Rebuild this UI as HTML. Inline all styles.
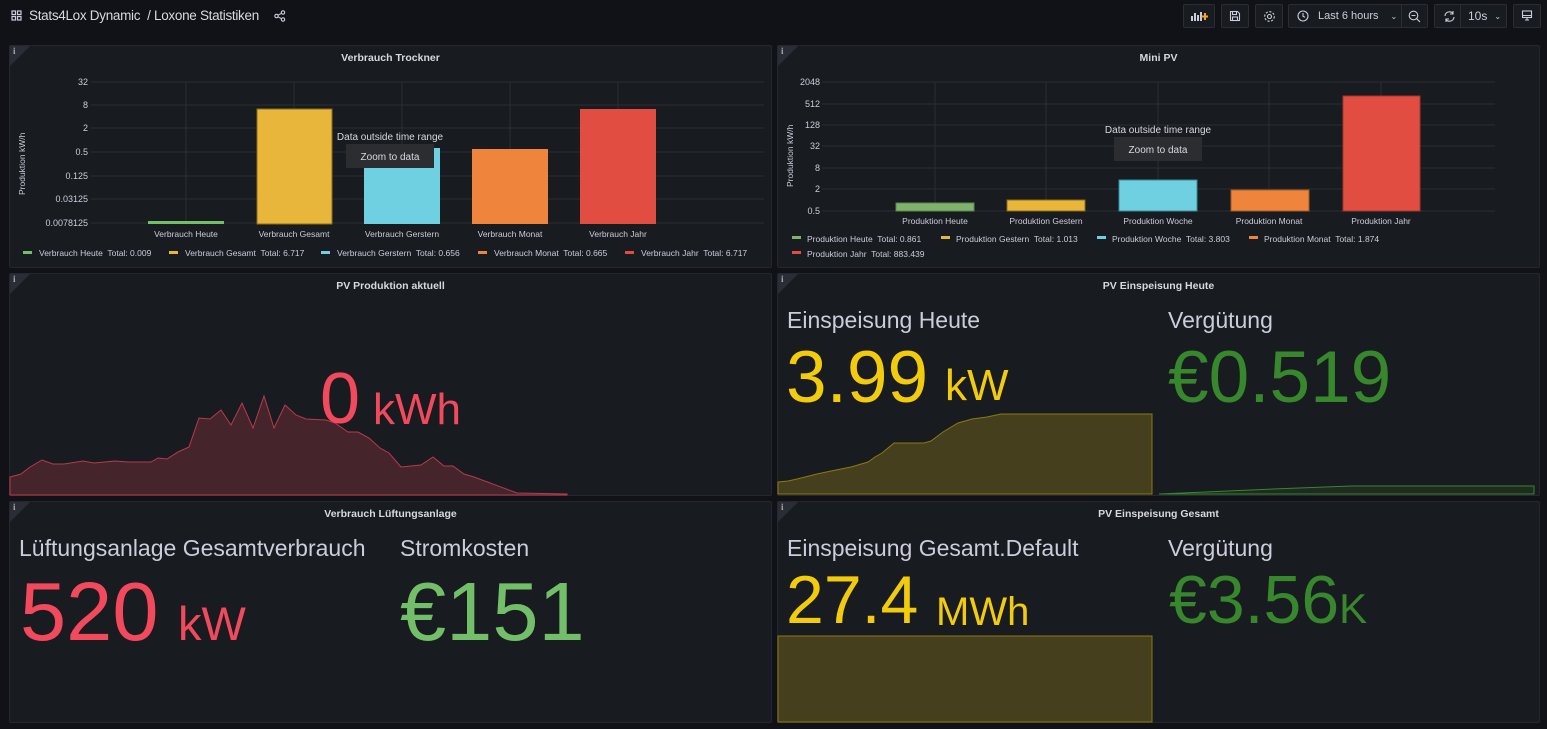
<!DOCTYPE html>
<html><head><meta charset="utf-8"><style>
*{margin:0;padding:0;box-sizing:border-box}
body{width:1547px;height:729px;background:#111217;font-family:"Liberation Sans",sans-serif;color:#ccccdc;position:relative;overflow:hidden}
.p{position:absolute;background:#181b1f;border:1px solid #24272e;border-radius:2px}
.t{position:absolute;left:0;right:0;top:6px;text-align:center;font-size:10.5px;font-weight:bold;color:#d8d9e0}
.i{position:absolute;left:0;top:0;width:0;height:0;border-top:20px solid #2a2d35;border-right:20px solid transparent}
.i span{position:absolute;left:3px;top:-20px;font-size:9px;font-family:"Liberation Serif",serif;font-weight:bold;color:#aaa}
.a{position:absolute;white-space:nowrap;line-height:1}
.btn{position:absolute;top:4px;height:24px;border:1px solid #2a2d35;background:#181b1f;border-radius:2px;color:#ccccdc;font-size:11px;display:flex;align-items:center;justify-content:center}
svg text{font-family:"Liberation Sans",sans-serif;white-space:pre}
</style></head><body>
<!-- header -->
<div class="a" style="left:11px;top:10px;font-size:13px;color:#9fa1a8">
<svg width="11" height="11" viewBox="0 0 11 11" fill="none" stroke="#ccccdc" stroke-width="1.2"><rect x="1" y="1" width="3.5" height="3.5"/><rect x="6.5" y="1" width="3.5" height="3.5"/><rect x="1" y="6.5" width="3.5" height="3.5"/><rect x="6.5" y="6.5" width="3.5" height="3.5"/></svg></div>
<div class="a" style="left:29px;top:9px;font-size:13.5px;letter-spacing:-0.3px;color:#d8d9e0">Stats4Lox Dynamic &nbsp;/ Loxone Statistiken</div>
<svg class="a" style="left:274px;top:10px" width="12" height="12" viewBox="0 0 12 12" fill="none" stroke="#ccccdc" stroke-width="1.1"><circle cx="9" cy="2.5" r="1.7"/><circle cx="2.5" cy="6" r="1.7"/><circle cx="9" cy="9.5" r="1.7"/><path d="M4 5.2L7.5 3.3M4 6.8L7.5 8.7"/></svg>

<div class="btn" style="left:1183px;width:32px"><svg width="18" height="12" viewBox="0 0 18 12"><g fill="#ccccdc"><rect x="1" y="6" width="2" height="5"/><rect x="4" y="3" width="2" height="8"/><rect x="7" y="5" width="2" height="6"/><rect x="10" y="2" width="2" height="9"/></g><path d="M15 3v7M11.5 6.5h7" stroke="#f5a623" stroke-width="2"/></svg></div>
<div class="btn" style="left:1221px;width:28px"><svg width="12" height="12" viewBox="0 0 12 12" fill="none" stroke="#ccccdc" stroke-width="1.1"><path d="M1.5 1.5h7l2 2v7h-9z"/><rect x="3.5" y="1.5" width="4" height="3"/><rect x="3.5" y="7" width="5" height="3.5"/></svg></div>
<div class="btn" style="left:1255px;width:28px"><svg width="13" height="13" viewBox="0 0 13 13" fill="none" stroke="#ccccdc" stroke-width="1.1"><circle cx="6.5" cy="6.5" r="2"/><circle cx="6.5" cy="6.5" r="4.8" stroke-dasharray="2.2 1.5"/></svg></div>
<div class="btn" style="left:1288px;width:140px;justify-content:flex-start;padding-left:8px"><svg width="12" height="12" viewBox="0 0 12 12" fill="none" stroke="#ccccdc" stroke-width="1.1"><circle cx="6" cy="6" r="5"/><path d="M6 3v3.3l2 1"/></svg><span style="margin-left:9px">Last 6 hours</span><span style="margin-left:12px;font-size:8px">&#8964;</span></div>
<div class="a" style="left:1401px;top:5px;width:1px;height:22px;background:#2a2d35"></div>
<svg class="a" style="left:1408px;top:10px" width="13" height="13" viewBox="0 0 13 13" fill="none" stroke="#ccccdc" stroke-width="1.1"><circle cx="5.5" cy="5.5" r="4.3"/><path d="M3.5 5.5h4M8.7 8.7l3.3 3.3"/></svg>
<div class="btn" style="left:1434px;width:73px;justify-content:flex-start;padding-left:8px"><svg width="13" height="13" viewBox="0 0 13 13" fill="none" stroke="#ccccdc" stroke-width="1.1"><path d="M2 6a4.5 4.5 0 0 1 8-2.5M11 7a4.5 4.5 0 0 1-8 2.5M10 1v3H7M3 12V9h3"/></svg><span style="margin-left:12px;font-size:12px">10s</span><span style="margin-left:7px;font-size:8px">&#8964;</span></div>
<div class="a" style="left:1460px;top:5px;width:1px;height:22px;background:#2a2d35"></div>
<div class="btn" style="left:1513px;width:28px"><svg width="12" height="12" viewBox="0 0 12 12" fill="none" stroke="#ccccdc" stroke-width="1.1"><rect x="1.5" y="1" width="9" height="6.5"/><path d="M1.5 5.5h9M4 10h4M6 7.5V10"/></svg></div>

<!-- Panel 1 -->
<div class="p" style="left:9px;top:45px;width:763px;height:223px"><div class="i"><span>i</span></div><div class="t">Verbrauch Trockner</div></div>
<svg class="a" style="left:9px;top:45px" width="763" height="223">
<g stroke="#2a2d33" stroke-width="1">
<path d="M82 37H755M82 60H755M82 83H755M82 107H755M82 131H755M82 154H755M82 178H755"/>
<path d="M177 37V178M285 37V178M393 37V178M501 37V178M609 37V178"/></g>
<g font-size="9" fill="#ccccdc" text-anchor="end"><text x="79" y="40">32</text><text x="79" y="63">8</text><text x="79" y="86">2</text><text x="79" y="110">0.5</text><text x="79" y="134">0.125</text><text x="79" y="157">0.03125</text><text x="79" y="181">0.0078125</text></g>
<text transform="translate(16,150) rotate(-90)" font-size="8.5" fill="#ccccdc">Produktion kW/h</text>
<rect x="139" y="176" width="76" height="3" fill="#73bf69"/>
<rect x="248" y="64" width="75" height="115" fill="#e8b63a" stroke="#8a6d1f"/>
<rect x="355" y="103" width="76" height="76" fill="#6ed0e0"/>
<rect x="463" y="104" width="76" height="75" fill="#ef843c"/>
<rect x="571" y="64" width="76" height="115" fill="#e24d42"/>
<g font-size="8.5" fill="#ccccdc" text-anchor="middle"><text x="177" y="192">Verbrauch Heute</text><text x="285" y="192">Verbrauch Gesamt</text><text x="393" y="192">Verbrauch Gerstern</text><text x="501" y="192">Verbrauch Monat</text><text x="609" y="192">Verbrauch Jahr</text></g>
<text x="381" y="95" font-size="10" fill="#d8d9e0" text-anchor="middle">Data outside time range</text>
<rect x="337" y="99" width="88" height="24" fill="#2c2d31"/>
<text x="381" y="115" font-size="10" fill="#d8d9e0" text-anchor="middle">Zoom to data</text>
<g font-size="8.5" fill="#ccccdc">
<rect x="14" y="206" width="9" height="3" fill="#73bf69"/><text x="30" y="211">Verbrauch Heute  Total: 0.009</text>
<rect x="160" y="206" width="9" height="3" fill="#e8b63a"/><text x="176" y="211">Verbrauch Gesamt  Total: 6.717</text>
<rect x="312" y="206" width="9" height="3" fill="#6ed0e0"/><text x="328" y="211">Verbrauch Gerstern  Total: 0.656</text>
<rect x="469" y="206" width="9" height="3" fill="#ef843c"/><text x="485" y="211">Verbrauch Monat  Total: 0.665</text>
<rect x="616" y="206" width="9" height="3" fill="#e24d42"/><text x="632" y="211">Verbrauch Jahr  Total: 6.717</text></g>
</svg>

<!-- Panel 2 -->
<div class="p" style="left:777px;top:45px;width:763px;height:223px"><div class="i"><span>i</span></div><div class="t">Mini PV</div></div>
<svg class="a" style="left:777px;top:45px" width="763" height="223">
<g stroke="#2a2d33"><path d="M45 37H718M45 59H718M45 80H718M45 101H718M45 123H718M45 144H718M45 166H718"/>
<path d="M158 37V166M269 37V166M381 37V166M492 37V166M604 37V166"/></g>
<g font-size="9" fill="#ccccdc" text-anchor="end"><text x="43" y="40">2048</text><text x="43" y="62">512</text><text x="43" y="83">128</text><text x="43" y="104">32</text><text x="43" y="126">8</text><text x="43" y="147">2</text><text x="43" y="169">0.5</text></g>
<text transform="translate(16,142) rotate(-90)" font-size="8.5" fill="#ccccdc">Produktion kW/h</text>
<rect x="119" y="158" width="78" height="8" fill="#7eb26d" stroke="#5a8a4a"/>
<rect x="230" y="155" width="78" height="11" fill="#e8b63a" stroke="#8a6d1f"/>
<rect x="342" y="135" width="78" height="31" fill="#6ed0e0" stroke="#3a8a95"/>
<rect x="454" y="145" width="78" height="21" fill="#ef843c" stroke="#a45a28"/>
<rect x="566" y="51" width="77" height="115" fill="#e24d42" stroke="#a03630"/>
<g font-size="8.5" fill="#ccccdc" text-anchor="middle"><text x="158" y="179">Produktion Heute</text><text x="269" y="179">Produktion Gestern</text><text x="381" y="179">Produktion Woche</text><text x="492" y="179">Produktion Monat</text><text x="604" y="179">Produktion Jahr</text></g>
<text x="381" y="88" font-size="10" fill="#d8d9e0" text-anchor="middle">Data outside time range</text>
<rect x="337" y="92" width="88" height="24" fill="#2c2d31"/>
<text x="381" y="108" font-size="10" fill="#d8d9e0" text-anchor="middle">Zoom to data</text>
<g font-size="8.5" fill="#ccccdc">
<rect x="15" y="191" width="9" height="3" fill="#7eb26d"/><text x="30" y="197">Produktion Heute  Total: 0.861</text>
<rect x="164" y="191" width="9" height="3" fill="#e8b63a"/><text x="179" y="197">Produktion Gestern  Total: 1.013</text>
<rect x="320" y="191" width="9" height="3" fill="#6ed0e0"/><text x="335" y="197">Produktion Woche  Total: 3.803</text>
<rect x="472" y="191" width="9" height="3" fill="#ef843c"/><text x="487" y="197">Produktion Monat  Total: 1.874</text>
<rect x="15" y="206" width="9" height="3" fill="#e24d42"/><text x="30" y="212">Produktion Jahr  Total: 883.439</text></g>
</svg>

<!-- Panel 3 -->
<div class="p" style="left:9px;top:273px;width:763px;height:223px"><div class="i"><span>i</span></div><div class="t">PV Produktion aktuell</div></div>
<svg class="a" style="left:0;top:0" width="780" height="729">
<path d="M10 477L21 474L30 467L42 460L53 464L64 464L83 461L94 463L115 461L128 462L151 462L158 458L167 459L178 452L189 447L199 418L210 419L221 410L231 425L242 403L253 428L264 396L274 428L285 405L296 415L306 419L326 420L335 423L348 432L358 432L369 438L380 448L389 453L401 467L421 465L433 457L444 466L453 466L464 474L474 477L517 493L567 494L567 495L10 495Z" fill="#46242b" stroke="#b83a4b" stroke-width="1"/>
</svg>
<div class="a" style="left:320px;top:363px;font-size:72px;color:#f2495c">0</div>
<div class="a" style="left:373px;top:388px;font-size:44px;color:#f2495c">kWh</div>

<!-- Panel 4 -->
<div class="p" style="left:777px;top:273px;width:763px;height:223px"><div class="i"><span>i</span></div><div class="t">PV Einspeisung Heute</div></div>
<!-- Panel 6 -->
<div class="p" style="left:777px;top:501px;width:763px;height:222px"><div class="i"><span>i</span></div><div class="t">PV Einspeisung Gesamt</div></div>
<svg class="a" style="left:0;top:0" width="1547" height="729">
<path d="M778 482L788 481L797 479L817 474L831 471L851 467L868 462L875 457L882 453L894 443L924 443L931 441L943 432L958 423L972 419L987 417L1001 414L1152 414L1152 494L778 494Z" fill="#463f1e" stroke="#8a7a10"/>
<path d="M1159 494L1273 489L1351 486L1534 486L1534 494Z" fill="#1f2b20" stroke="#37872d"/>
<path d="M778 636H1152V722H778Z" fill="#463f1e" stroke="#8a7a10"/>
</svg>
<div class="a" style="left:787px;top:309px;font-size:23px;color:#ccccdc">Einspeisung Heute</div>
<div class="a" style="left:786px;top:341px;font-size:73px;color:#f2cc0c">3.99</div>
<div class="a" style="left:945px;top:364px;font-size:44px;color:#f2cc0c">kW</div>
<div class="a" style="left:1168px;top:309px;font-size:23px;color:#ccccdc">Vergütung</div>
<div class="a" style="left:1168px;top:341px;font-size:73px;color:#37872d">€0.519</div>

<!-- Panel 5 -->
<div class="p" style="left:9px;top:501px;width:763px;height:222px"><div class="i"><span>i</span></div><div class="t">Verbrauch Lüftungsanlage</div></div>
<div class="a" style="left:19px;top:537px;font-size:23px;color:#ccccdc">Lüftungsanlage Gesamtverbrauch</div>
<div class="a" style="left:20px;top:570px;font-size:83px;color:#f2495c">520</div>
<div class="a" style="left:178px;top:600px;font-size:47px;color:#f2495c">kW</div>
<div class="a" style="left:400px;top:537px;font-size:23px;color:#ccccdc">Stromkosten</div>
<div class="a" style="left:400px;top:570px;font-size:83px;color:#73bf69">€151</div>

<div class="a" style="left:787px;top:537px;font-size:23px;color:#ccccdc">Einspeisung Gesamt.Default</div>
<div class="a" style="left:786px;top:566px;font-size:68px;color:#f2cc0c">27.4</div>
<div class="a" style="left:936px;top:592px;font-size:40px;color:#f2cc0c">MWh</div>
<div class="a" style="left:1168px;top:537px;font-size:23px;color:#ccccdc">Vergütung</div>
<div class="a" style="left:1169px;top:566px;font-size:68px;color:#37872d">€3.56<span style="font-size:42px">K</span></div>
</body></html>
